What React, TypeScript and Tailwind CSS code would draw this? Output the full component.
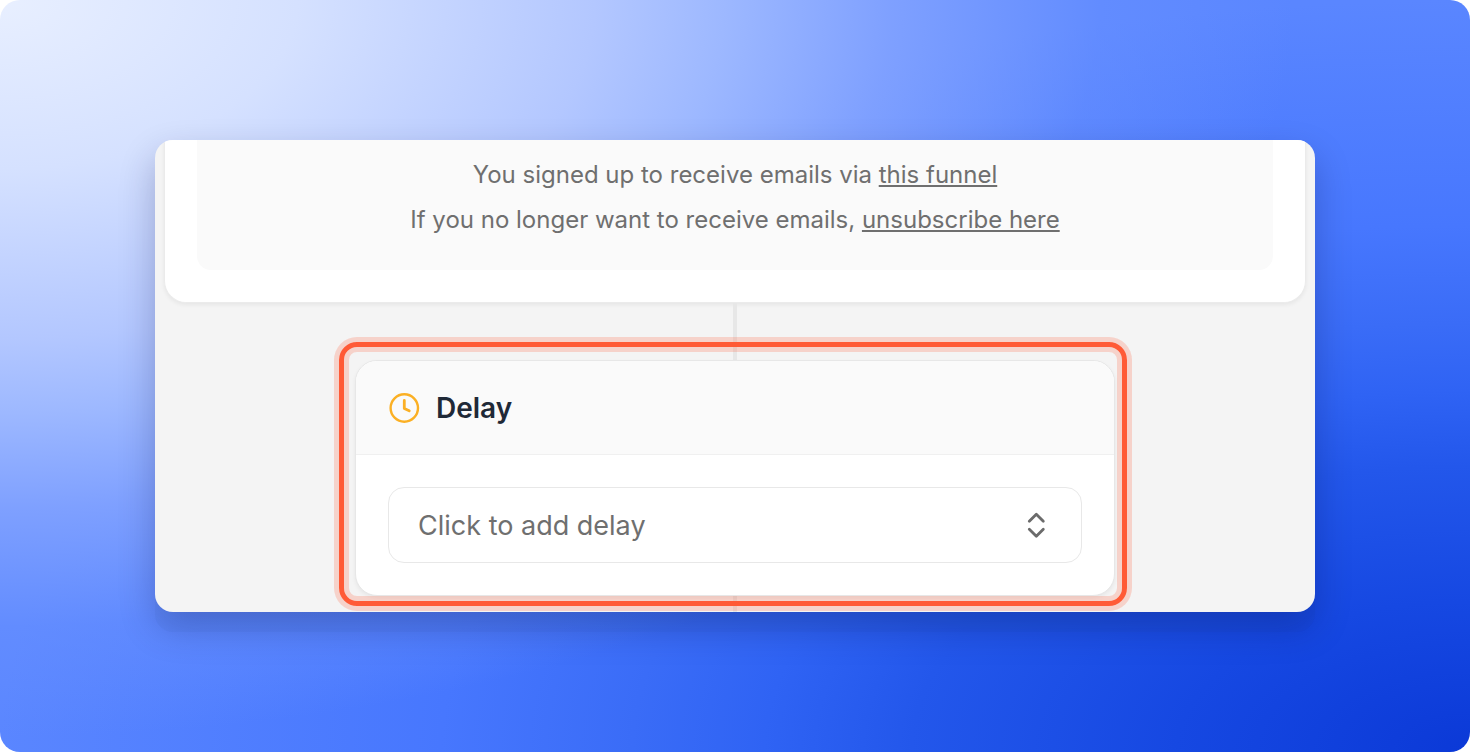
function ClockIcon() {
  return (
    <svg viewBox="0 0 32 32" fill="none" stroke="currentColor" strokeLinecap="round" strokeLinejoin="round" className="size-8 text-[#fbb024]" aria-hidden="true">
      <circle cx="16.3" cy="16" r="13.7" strokeWidth="2.4" />
      <path d="M16.3 8.4V16.4L21.2 18.8" strokeWidth="2.8" />
    </svg>
  );
}

function UpDownIcon() {
  return (
    <svg viewBox="0 0 32 32" fill="none" stroke="currentColor" strokeWidth="2.8" strokeLinecap="round" strokeLinejoin="round" className="pointer-events-none col-start-1 row-start-1 mr-[30px] size-8 self-center justify-self-end text-[#6b6b6b]" aria-hidden="true">
      <path d="M9.3 12.3L16.3 5.3L23.3 12.3M9.3 20.3L16.3 27.3L23.3 20.3" />
    </svg>
  );
}

function EmailFooter() {
  return (
    <section className="mx-[9px] rounded-b-[22px] border border-t-0 border-[#ebebeb] bg-white px-8 pb-8 shadow-[0_2px_4px_rgba(0,0,0,0.06)]">
      <div className="rounded-b-[14px] bg-[#fafafa] pt-3 pb-7 text-center text-2xl leading-[45px] text-[#6f6f6f]">
        <p>
          You signed up to receive emails via{" "}
          <a href="#funnel" className="underline">this funnel</a>
        </p>
        <p>
          If you no longer want to receive emails,{" "}
          <a href="#unsubscribe" className="underline">unsubscribe here</a>
        </p>
      </div>
    </section>
  );
}

function DelayStep() {
  return (
    <section className="relative w-full max-w-[760px] rounded-[22px] border border-[#e7e7e7] bg-white shadow-[0_2px_4px_rgba(0,0,0,0.06)]">
      <header className="flex h-[94px] items-center gap-4 rounded-t-[21px] border-b border-[#f0f0f0] bg-[#fafafa] px-8">
        <ClockIcon />
        <h2 className="text-[28px] leading-9 font-semibold text-[#1f2937]">Delay</h2>
      </header>
      <div className="grid p-8">
        <select aria-label="Delay" className="col-start-1 row-start-1 h-[76px] w-full appearance-none rounded-2xl border border-[#e8e8e8] bg-white px-[29px] pt-0.5 text-[27px] text-[#6f6f6f]">
          <option>Click to add delay</option>
        </select>
        <UpDownIcon />
      </div>
      <div className="pointer-events-none absolute -top-[19px] -right-[13px] -bottom-[11px] -left-[17px] rounded-[18px] border-[5px] border-[#ff5a36] shadow-[0_0_0_5px_rgba(255,90,54,0.22),inset_0_0_0_5px_rgba(255,90,54,0.22)]" />
    </section>
  );
}

export default function App() {
  return (
    <div className="bg-white font-[Inter,sans-serif]">
      <main className="min-h-screen rounded-[20px] bg-[radial-gradient(ellipse_88%_98%_at_0%_0%,#e8efff_0%,#d5e1ff_23%,#b3c7ff_46%,#9db8ff_56%,#84a4ffdd_69%,#6a92ff80_85%,#5c86ff00_100%),radial-gradient(ellipse_100%_100%_at_100%_100%,#0b39d7_0%,#1648e2_20%,#2357eb_38%,#2f63f4_48%,#3a6cf7_57%,#4777fe_70%,#5a86ff_100%)] px-[155px] py-[140px]">
        <div className="overflow-hidden rounded-[18px] bg-[#f4f4f4] shadow-[0_20px_0_rgba(20,50,100,0.04),0_16px_36px_rgba(0,10,60,0.24)]">
          <EmailFooter />
          <div className="flex flex-col items-center">
            <div className="h-[57px] w-1 bg-[#e7e7e7]" />
            <DelayStep />
            <div className="h-4 w-1 bg-[#e7e7e7]" />
          </div>
        </div>
      </main>
    </div>
  );
}
